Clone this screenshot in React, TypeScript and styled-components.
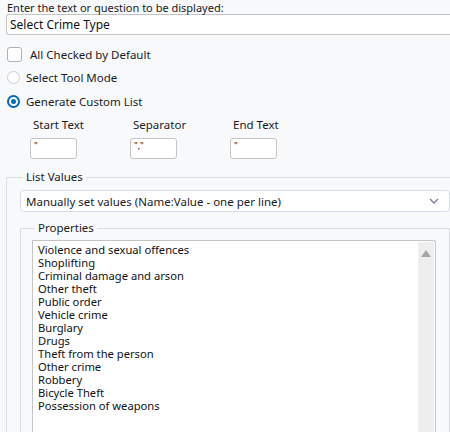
import React from "react";
import styled, { createGlobalStyle } from "styled-components";

const GlobalStyle = createGlobalStyle`
  html, body {
    margin: 0;
    padding: 0;
    background: #f8f9fb;
    overflow: hidden;
  }
  body {
    font-family: "Noto Sans", "Open Sans", sans-serif;
    font-size: 11px;
    color: #1b1b1b;
  }
`;

const crimes = [
  "Violence and sexual offences",
  "Shoplifting",
  "Criminal damage and arson",
  "Other theft",
  "Public order",
  "Vehicle crime",
  "Burglary",
  "Drugs",
  "Theft from the person",
  "Other crime",
  "Robbery",
  "Bicycle Theft",
  "Possession of weapons",
];

function App() {
  return (
    <Page>
      <GlobalStyle />
      <Prompt>Enter the text or question to be displayed:</Prompt>
      <TextInput>Select Crime Type</TextInput>

      <OptionRow top={12}>
        <CheckBox />
        <CheckLabel>All Checked by Default</CheckLabel>
      </OptionRow>
      <OptionRow top={8}>
        <Radio />
        <span>Select Tool Mode</span>
      </OptionRow>
      <OptionRow top={9}>
        <Radio checked />
        <span>Generate Custom List</span>
      </OptionRow>

      <Affixes>
        <AffixField>
          <AffixLabel>Start Text</AffixLabel>
          <SmallBox>"</SmallBox>
        </AffixField>
        <AffixField>
          <AffixLabel>Separator</AffixLabel>
          <SmallBox>","</SmallBox>
        </AffixField>
        <AffixField>
          <AffixLabel>End Text</AffixLabel>
          <SmallBox>"</SmallBox>
        </AffixField>
      </Affixes>

      <Group>
        <Legend>List Values</Legend>
        <Select>
          <span>Manually set values (Name:Value - one per line)</span>
          <svg width="10" height="6" viewBox="0 0 10 6">
            <polyline
              points="1,1 5,5 9,1"
              fill="none"
              stroke="#7a8494"
              strokeWidth="1.4"
            />
          </svg>
        </Select>

        <InnerGroup>
          <Legend>Properties</Legend>
          <ListBox>
            <ListLines>
              {crimes.map((c) => (
                <div key={c}>{c}</div>
              ))}
            </ListLines>
            <ScrollTrack>
              <svg width="10" height="7" viewBox="0 0 10 7">
                <polygon points="5,0 10,7 0,7" fill="#a6a6a6" />
              </svg>
            </ScrollTrack>
          </ListBox>
        </InnerGroup>
      </Group>
    </Page>
  );
}

const Page = styled.div`
  width: 464px;
  padding: 2px 0 0 6px;
  box-sizing: border-box;
`;

const Prompt = styled.div`
  padding-left: 1px;
  line-height: 12px;
  height: 12px;
`;

const TextInput = styled.div`
  height: 21px;
  box-sizing: border-box;
  border: 1px solid #c4c4c4;
  border-right: none;
  border-radius: 3px 0 0 3px;
  background: #ffffff;
  padding: 0 3px;
  display: flex;
  align-items: center;
  font-size: 12px;
  color: #111;
`;

const OptionRow = styled.div<{ top: number }>`
  display: flex;
  align-items: center;
  gap: 6px;
  margin-top: ${(p) => p.top}px;
  padding-left: 1px;
  height: 15px;
  font-size: 11.5px;
`;

const CheckBox = styled.span`
  width: 15px;
  height: 15px;
  box-sizing: border-box;
  border: 1px solid #a9b1bc;
  border-radius: 3px;
  background: #ffffff;
`;

const CheckLabel = styled.span`
  margin-left: 2px;
`;

const Radio = styled.span<{ checked?: boolean }>`
  width: 13px;
  height: 13px;
  box-sizing: border-box;
  border-radius: 50%;
  background: #ffffff;
  border: ${(p) => (p.checked ? "2px solid #0067c0" : "1px solid #c9ced6")};
  position: relative;
  &::after {
    content: "";
    display: ${(p) => (p.checked ? "block" : "none")};
    position: absolute;
    left: 50%;
    top: 50%;
    width: 5px;
    height: 5px;
    margin: -2.5px 0 0 -2.5px;
    border-radius: 50%;
    background: #0067c0;
  }
`;

const Affixes = styled.div`
  display: grid;
  grid-template-columns: repeat(3, 100px);
  margin-top: 8px;
  padding-left: 24px;
`;

const AffixField = styled.div`
  display: flex;
  flex-direction: column;
  gap: 6px;
`;

const AffixLabel = styled.div`
  padding-left: 3px;
  font-size: 11.5px;
  line-height: 15px;
`;

const SmallBox = styled.div`
  width: 47px;
  height: 21px;
  box-sizing: border-box;
  border: 1px solid #c4c4c4;
  border-radius: 3px;
  background: #ffffff;
  font-size: 9px;
  line-height: 10px;
  padding: 2px 0 0 3px;
  color: #222;
`;

const Group = styled.fieldset`
  margin: 11px 0 0 0;
  padding: 6px 13px 0 13px;
  border: 1px solid #d9dce1;
  border-bottom: none;
  min-width: 0;
`;

const Legend = styled.legend`
  padding: 0 3px;
  margin-left: 3px;
  font-size: 11.5px;
  line-height: 14px;
`;

const Select = styled.div`
  height: 22px;
  box-sizing: border-box;
  border: 1px solid #d6dde8;
  border-radius: 4px;
  background: #ffffff;
  display: flex;
  align-items: center;
  justify-content: space-between;
  padding: 0 10px 0 5px;
  font-size: 11.5px;
`;

const InnerGroup = styled.fieldset`
  margin: 9px 0 0 0;
  padding: 5px 13px 0 11px;
  border: 1px solid #d9dce1;
  border-bottom: none;
  min-width: 0;
`;

const ListBox = styled.div`
  height: 200px;
  box-sizing: border-box;
  border: 1px solid #c4c4c4;
  border-bottom: none;
  border-radius: 0 3px 0 0;
  background: #ffffff;
  display: flex;
  justify-content: space-between;
  padding: 1px 1px 0 5px;
`;

const ListLines = styled.div`
  padding-top: 1px;
  font-size: 11.2px;
  line-height: 13px;
  color: #111;
`;

const ScrollTrack = styled.div`
  width: 16px;
  background: #eeeeee;
  display: flex;
  justify-content: center;
  padding-top: 8px;
  box-sizing: border-box;
`;

export default App;
